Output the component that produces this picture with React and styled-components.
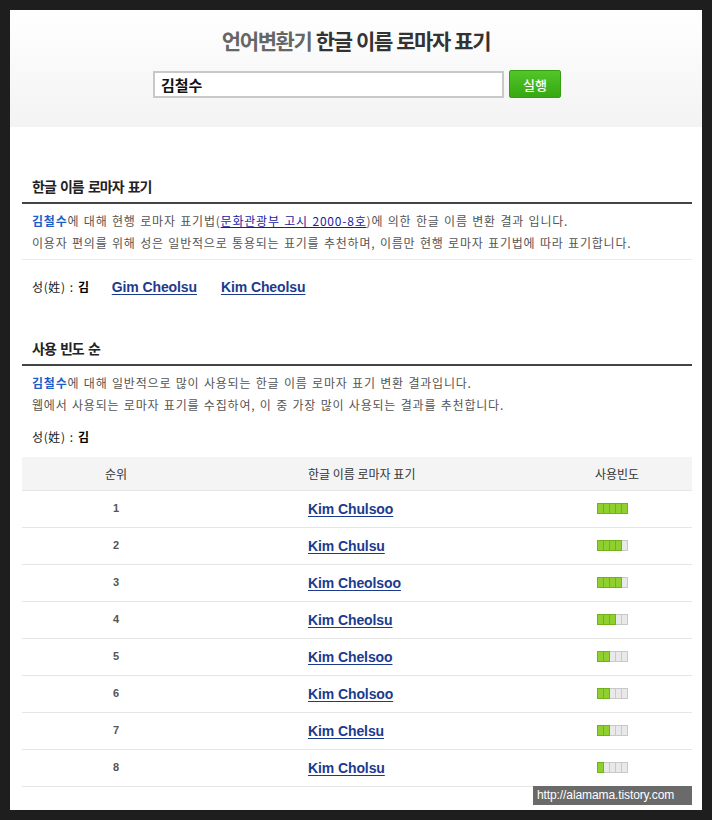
import React from "react";
import styled, { createGlobalStyle } from "styled-components";

const Global = createGlobalStyle`
  html, body { margin: 0; padding: 0; background: #1e1e1e; }
  body { font-family: "Noto Sans CJK KR", "Noto Sans", sans-serif; }
  * { box-sizing: border-box; }
`;

const Page = styled.div`
  position: relative;
  margin: 10px;
  width: 692px;
  min-height: 800px;
  background: #fff;
  overflow: hidden;
`;

const Header = styled.header`
  padding: 15px 0 29px;
  background: linear-gradient(#ffffff, #f3f3f3);
  display: flex;
  flex-direction: column;
  align-items: center;
  gap: 15px;
`;

const Title = styled.h1`
  margin: 0;
  font-size: 21px;
  line-height: 30px;
  font-weight: 700;
  letter-spacing: -1.4px;
  word-spacing: 1px;
  color: #333;
`;

const TitleSub = styled.span`
  color: #666;
`;

const SearchRow = styled.form`
  display: flex;
  align-items: center;
  gap: 5px;
  margin-left: 2px;
`;

const Input = styled.input`
  width: 351px;
  height: 27px;
  border: 2px solid #c8c8c8;
  padding: 0 6px;
  font-family: "Noto Sans CJK KR", sans-serif;
  font-size: 15px;
  font-weight: 700;
  color: #111;
  outline: none;
`;

const Button = styled.button`
  width: 52px;
  height: 28px;
  border: 1px solid #33a012;
  border-radius: 2px;
  background: linear-gradient(#52c629, #36a711);
  color: #fff;
  font-family: "Noto Sans CJK KR", sans-serif;
  font-size: 13px;
  font-weight: 500;
  padding: 0;
`;

const Content = styled.main`
  padding: 0 10px 0 12px;
`;

const Section = styled.section`
  margin-top: ${(p) => p.$top}px;
`;

const Heading = styled.h2`
  margin: 0;
  padding: 0 10px 6px;
  font-size: 14px;
  line-height: 20px;
  font-weight: 700;
  letter-spacing: -1px;
  word-spacing: 2px;
  color: #222;
  border-bottom: 2px solid #444;
`;

const Desc = styled.div`
  margin-top: 6px;
  padding: 0 10px ${(p) => (p.$rule ? 5 : 0)}px;
  font-size: 12px;
  line-height: 22px;
  color: #555;
  letter-spacing: 0.8px;
  word-spacing: 1px;
  border-bottom: ${(p) => (p.$rule ? "1px solid #ebebeb" : "none")};
  p { margin: 0; }
`;

const NameHi = styled.strong`
  color: #1a5fc8;
  font-weight: 700;
`;

const LawLink = styled.a`
  color: #1a1aa6;
  text-decoration: underline;
`;

const NameRow = styled.div`
  margin-top: ${(p) => p.$top}px;
  padding: 0 10px;
  display: flex;
  align-items: center;
  gap: 22px;
  line-height: 20px;
  font-size: 12px;
  color: #222;
`;

const Surname = styled.span`
  letter-spacing: 0.6px;
  word-spacing: 1px;
  b { color: #000; font-weight: 700; }
`;

const RomanLinks = styled.div`
  display: flex;
  gap: 24px;
`;

const RomanLink = styled.a`
  font-family: "Liberation Sans", Arial, sans-serif;
  font-size: 14px;
  font-weight: 700;
  letter-spacing: -0.1px;
  color: #1c3b8e;
  text-decoration: underline;
  text-underline-offset: 2px;
`;

const Table = styled.div`
  margin-top: 10px;
`;

const Row = styled.div`
  display: grid;
  grid-template-columns: 188px 1fr 148px;
  align-items: center;
  height: ${(p) => (p.$head ? 34 : 37)}px;
  padding-bottom: ${(p) => (p.$head ? 0 : 2)}px;
  background: ${(p) => (p.$head ? "#f4f4f4" : "#fff")};
  border-bottom: 1px solid #e6e6e6;
  font-size: 12px;
  color: #333;
`;

const Rank = styled.div`
  text-align: center;
  font-family: ${(p) => (p.$head ? '"Noto Sans CJK KR", sans-serif' : '"Liberation Sans", Arial, sans-serif')};
  font-weight: ${(p) => (p.$head ? 400 : 700)};
  font-size: ${(p) => (p.$head ? 12 : 11)}px;
  color: ${(p) => (p.$head ? "#333" : "#555")};
`;

const NameCell = styled.div`
  padding-left: 98px;
`;

const FreqCell = styled.div`
  display: flex;
  padding-left: ${(p) => (p.$head ? 51 : 53)}px;
`;

const Bar = styled.div`
  display: flex;
`;

const Seg = styled.span`
  width: 7px;
  height: 11px;
  margin-left: -1px;
  border: 1px solid ${(p) => (p.$on ? "#72b01e" : "#c9c9c9")};
  background: ${(p) => (p.$on ? "#8fd02f" : "#e9e9e9")};
  &:first-child { margin-left: 0; }
  ${(p) => p.$on && "position: relative; z-index: 1;"}
`;

const Watermark = styled.div`
  position: absolute;
  right: 10px;
  bottom: 5px;
  width: 159px;
  height: 19px;
  background: #6a6a6a;
  color: #fff;
  font-family: "Liberation Sans", Arial, sans-serif;
  font-size: 12px;
  line-height: 19px;
  padding-left: 4px;
  letter-spacing: -0.1px;
`;

const rows = [
  ["Kim Chulsoo", 5],
  ["Kim Chulsu", 4],
  ["Kim Cheolsoo", 4],
  ["Kim Cheolsu", 3],
  ["Kim Chelsoo", 2],
  ["Kim Cholsoo", 2],
  ["Kim Chelsu", 2],
  ["Kim Cholsu", 1],
];

export default function App() {
  return (
    <>
      <Global />
      <Page>
        <Header>
          <Title>
            <TitleSub>언어변환기</TitleSub> 한글 이름 로마자 표기
          </Title>
          <SearchRow onSubmit={(e) => e.preventDefault()}>
            <Input defaultValue="김철수" />
            <Button type="submit">실행</Button>
          </SearchRow>
        </Header>
        <Content>
          <Section $top={49}>
            <Heading>한글 이름 로마자 표기</Heading>
            <Desc $rule>
              <p>
                <NameHi>김철수</NameHi>에 대해 현행 로마자 표기법(
                <LawLink href="#">문화관광부 고시 2000-8호</LawLink>)에 의한 한글 이름 변환 결과 입니다.
              </p>
              <p>이용자 편의를 위해 성은 일반적으로 통용되는 표기를 추천하며, 이름만 현행 로마자 표기법에 따라 표기합니다.</p>
            </Desc>
            <NameRow $top={17}>
              <Surname>
                성(姓) : <b>김</b>
              </Surname>
              <RomanLinks>
                <RomanLink href="#">Gim Cheolsu</RomanLink>
                <RomanLink href="#">Kim Cheolsu</RomanLink>
              </RomanLinks>
            </NameRow>
          </Section>
          <Section $top={41}>
            <Heading>사용 빈도 순</Heading>
            <Desc>
              <p>
                <NameHi>김철수</NameHi>에 대해 일반적으로 많이 사용되는 한글 이름 로마자 표기 변환 결과입니다.
              </p>
              <p>웹에서 사용되는 로마자 표기를 수집하여, 이 중 가장 많이 사용되는 결과를 추천합니다.</p>
            </Desc>
            <NameRow $top={11}>
              <Surname>
                성(姓) : <b>김</b>
              </Surname>
            </NameRow>
            <Table>
              <Row $head>
                <Rank $head>순위</Rank>
                <NameCell>한글 이름 로마자 표기</NameCell>
                <FreqCell $head>사용빈도</FreqCell>
              </Row>
              {rows.map(([name, lvl], i) => (
                <Row key={name}>
                  <Rank>{i + 1}</Rank>
                  <NameCell>
                    <RomanLink href="#">{name}</RomanLink>
                  </NameCell>
                  <FreqCell>
                    <Bar>
                      {[0, 1, 2, 3, 4].map((k) => (
                        <Seg key={k} $on={k < lvl} />
                      ))}
                    </Bar>
                  </FreqCell>
                </Row>
              ))}
            </Table>
          </Section>
        </Content>
        <Watermark>http://alamama.tistory.com</Watermark>
      </Page>
    </>
  );
}
